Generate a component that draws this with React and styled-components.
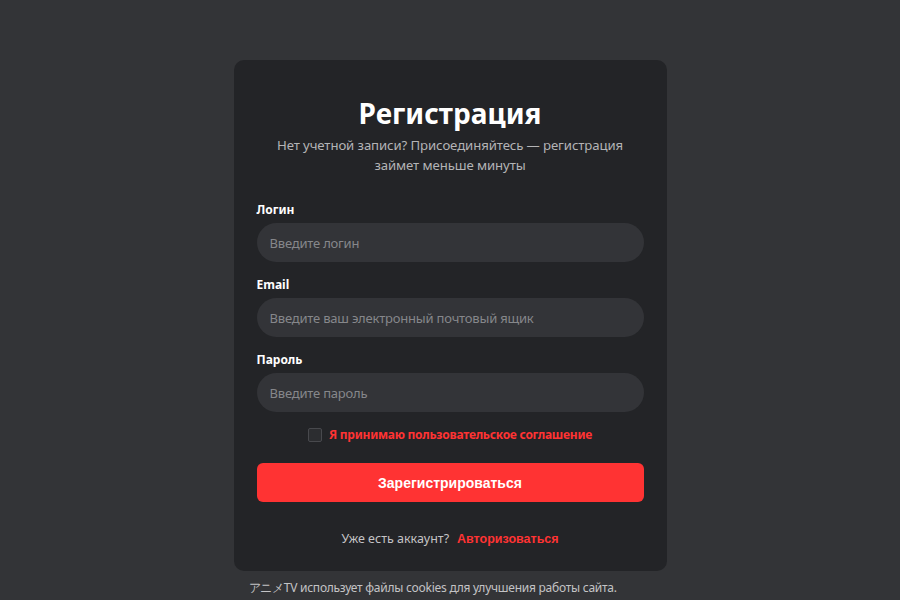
import React from 'react';
import styled, { createGlobalStyle } from 'styled-components';

const GlobalStyle = createGlobalStyle`
  html, body {
    margin: 0;
    padding: 0;
    background: #333437;
    font-family: "Noto Sans", "Open Sans", sans-serif;
  }
`;

const Page = styled.div`
  width: 900px;
  height: 600px;
  display: flex;
  flex-direction: column;
  align-items: center;
  padding-top: 60px;
  box-sizing: border-box;
  overflow: hidden;
`;

const Card = styled.form`
  flex-shrink: 0;
  width: 433px;
  height: 511px;
  box-sizing: border-box;
  background: #232427;
  border-radius: 10px;
  padding: 34px 23px 0;
  display: flex;
  flex-direction: column;
`;

const Title = styled.h1`
  margin: 0;
  text-align: center;
  color: #ffffff;
  font-size: 28px;
  font-weight: 700;
  line-height: 38px;
`;

const Subtitle = styled.p`
  margin: 3px 0 0;
  text-align: center;
  color: #b4b4b6;
  font-size: 13.2px;
  letter-spacing: -0.1px;
  line-height: 20px;
`;

const Field = styled.div`
  display: flex;
  flex-direction: column;
  margin-top: ${(p) => p.$top}px;
`;

const Label = styled.label`
  color: #ffffff;
  font-size: 12px;
  font-weight: 700;
  line-height: 18px;
  margin-bottom: 4px;
`;

const Input = styled.input`
  height: 39px;
  box-sizing: border-box;
  border: none;
  outline: none;
  border-radius: 20px;
  background: #333438;
  padding: 0 13px;
  color: #fff;
  font-family: inherit;
  font-size: 13px;
  letter-spacing: -0.2px;
  &::placeholder {
    color: #86878b;
  }
`;

const Agree = styled.label`
  display: flex;
  align-items: center;
  justify-content: center;
  gap: 7px;
  margin-top: 14px;
  color: #ff3333;
  font-size: 12px;
  letter-spacing: -0.25px;
  font-weight: 700;
  line-height: 18px;
`;

const Box = styled.span`
  width: 12px;
  height: 12px;
  border: 1px solid #48494d;
  border-radius: 2px;
  background: #2c2d30;
`;

const Submit = styled.button`
  margin-top: 19px;
  height: 39px;
  border: none;
  border-radius: 6px;
  background: #ff3333;
  color: #ffffff;
  font-family: "Liberation Sans", Arial, sans-serif;
  font-size: 14px;
  font-weight: 700;
`;

const Footer = styled.div`
  margin-top: 27px;
  display: flex;
  justify-content: center;
  gap: 8px;
  font-size: 12.5px;
  line-height: 20px;
  color: #c3c3c5;
`;

const Link = styled.a`
  color: #ff3333;
  font-family: "Liberation Sans", Arial, sans-serif;
  font-size: 12.5px;
  font-weight: 700;
  text-decoration: none;
`;

const Cookie = styled.div`
  width: 433px;
  padding: 8px 15px 0;
  box-sizing: border-box;
  white-space: nowrap;
  color: #c3c3c5;
  font-size: 12px;
  letter-spacing: -0.25px;
  line-height: 18px;
`;

export default function App() {
  return (
    <Page>
      <GlobalStyle />
      <Card onSubmit={(e) => e.preventDefault()}>
        <Title>Регистрация</Title>
        <Subtitle>Нет учетной записи? Присоединяйтесь — регистрация займет меньше минуты</Subtitle>
        <Field $top={26}>
          <Label>Логин</Label>
          <Input placeholder="Введите логин" />
        </Field>
        <Field $top={14}>
          <Label>Email</Label>
          <Input placeholder="Введите ваш электронный почтовый ящик" />
        </Field>
        <Field $top={14}>
          <Label>Пароль</Label>
          <Input type="password" placeholder="Введите пароль" />
        </Field>
        <Agree>
          <Box />
          Я принимаю пользовательское соглашение
        </Agree>
        <Submit type="submit">Зарегистрироваться</Submit>
        <Footer>
          <span>Уже есть аккаунт?</span>
          <Link href="#">Авторизоваться</Link>
        </Footer>
      </Card>
      <Cookie>アニメTV использует файлы cookies для улучшения работы сайта.</Cookie>
    </Page>
  );
}
